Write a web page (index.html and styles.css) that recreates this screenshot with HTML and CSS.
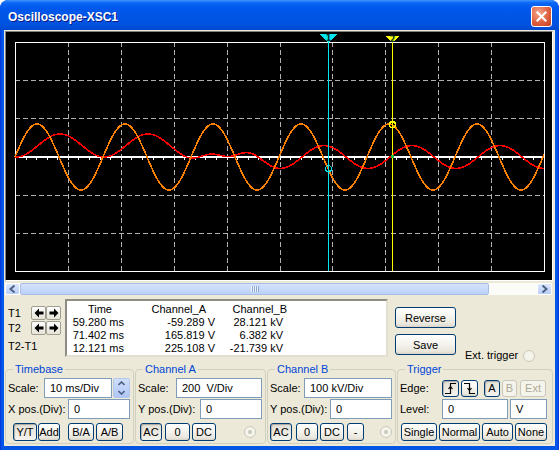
FILE: index.html
```html
<!DOCTYPE html>
<html lang="en">
<head>
  <meta charset="UTF-8">
  <title>Oscilloscope-XSC1</title>
  <link rel="stylesheet" href="styles.css">
</head>
<body>
<div class="window">
  <div class="titlebar">
    <span class="title">Oscilloscope-XSC1</span>
    <button class="close">
      <svg width="13" height="13" viewBox="0 0 13 13"><path d="M2.5 2.5 L10.5 10.5 M10.5 2.5 L2.5 10.5" stroke="#fff" stroke-width="2.2" stroke-linecap="square"/></svg>
    </button>
  </div>

  <div class="client">
    <!-- scope screen, drawn in page coordinates via the viewBox -->
    <div class="screen">
      <svg id="scope" width="546" height="248" viewBox="6 32 546 248" shape-rendering="crispEdges">
        <g id="grid"></g>
        <g id="traces"></g>
        <g id="cursors"></g>
      </svg>
    </div>

    <div class="hscroll">
      <div class="sb-btn"><svg width="7" height="8" viewBox="0 0 7 8"><path d="M5.5 0.5 L1.5 4 L5.5 7.5" fill="none" stroke="#4D6185" stroke-width="2"/></svg></div>
      <div class="sb-thumb"><span class="grip"></span></div>
      <div class="sb-track"></div>
      <div class="sb-btn"><svg width="7" height="8" viewBox="0 0 7 8"><path d="M1.5 0.5 L5.5 4 L1.5 7.5" fill="none" stroke="#4D6185" stroke-width="2"/></svg></div>
    </div>

    <div class="readout">
      <div class="cursors">
        <div class="crow">
          <span class="clabel">T1</span>
          <button class="arr"><svg width="10" height="10" viewBox="0 0 10 10"><path d="M0.5 5 L5 0.5 V3.5 H9.5 V6.5 H5 V9.5 Z"/></svg></button>
          <button class="arr"><svg width="10" height="10" viewBox="0 0 10 10"><path d="M9.5 5 L5 0.5 V3.5 H0.5 V6.5 H5 V9.5 Z"/></svg></button>
        </div>
        <div class="crow">
          <span class="clabel">T2</span>
          <button class="arr"><svg width="10" height="10" viewBox="0 0 10 10"><path d="M0.5 5 L5 0.5 V3.5 H9.5 V6.5 H5 V9.5 Z"/></svg></button>
          <button class="arr"><svg width="10" height="10" viewBox="0 0 10 10"><path d="M9.5 5 L5 0.5 V3.5 H0.5 V6.5 H5 V9.5 Z"/></svg></button>
        </div>
        <div class="cdiff">T2-T1</div>
      </div>

      <div class="readings">
        <span class="h h-time">Time</span><span class="h h-a">Channel_A</span><span class="h h-b">Channel_B</span>
        <span>59.280 ms</span><span>-59.289 V</span><span>28.121 kV</span>
        <span>71.402 ms</span><span>165.819 V</span><span>6.382 kV</span>
        <span>12.121 ms</span><span>225.108 V</span><span>-21.739 kV</span>
      </div>

      <div class="side">
        <button class="btn big">Reverse</button>
        <button class="btn big">Save</button>
      </div>

      <div class="ext">Ext. trigger <span class="radio"></span></div>
    </div>

    <div class="controls">
      <fieldset class="group tb">
        <legend>Timebase</legend>
        <div class="row">
          <span class="lbl w36">Scale:</span>
          <div class="field w68">10 ms/Div</div>
          <div class="spin">
            <svg width="7" height="5" viewBox="0 0 7 5"><path d="M0.5 4 L3.5 1 L6.5 4" fill="none" stroke="#4D6185" stroke-width="1.6"/></svg>
            <svg width="7" height="5" viewBox="0 0 7 5"><path d="M0.5 1 L3.5 4 L6.5 1" fill="none" stroke="#4D6185" stroke-width="1.6"/></svg>
          </div>
        </div>
        <div class="row">
          <span class="lbl w60">X pos.(Div):</span>
          <div class="field w62">0</div>
        </div>
        <div class="row btns">
          <button class="btn on" style="margin-left:5px;width:24px">Y/T</button>
          <button class="btn" style="margin-left:1px;width:22px">Add</button>
          <button class="btn" style="margin-left:8px;width:26px">B/A</button>
          <button class="btn" style="margin-left:2px;width:27px">A/B</button>
        </div>
      </fieldset>

      <fieldset class="group ca">
        <legend>Channel A</legend>
        <div class="row">
          <span class="lbl w38">Scale:</span>
          <div class="field w86">200&nbsp; V/Div</div>
        </div>
        <div class="row">
          <span class="lbl w62">Y pos.(Div):</span>
          <div class="field w62">0</div>
        </div>
        <div class="row btns">
          <button class="btn on" style="margin-left:2px;width:22px">AC</button>
          <button class="btn" style="margin-left:3px;width:25px">0</button>
          <button class="btn" style="margin-left:2px;width:24px">DC</button>
          <span class="radio dot" style="margin-left:28px"></span>
        </div>
      </fieldset>

      <fieldset class="group cb">
        <legend>Channel B</legend>
        <div class="row">
          <span class="lbl w34">Scale:</span>
          <div class="field w88">100 kV/Div</div>
        </div>
        <div class="row">
          <span class="lbl w60">Y pos.(Div):</span>
          <div class="field w62">0</div>
        </div>
        <div class="row btns">
          <button class="btn on" style="width:22px">AC</button>
          <button class="btn" style="margin-left:4px;width:22px">0</button>
          <button class="btn" style="margin-left:2px;width:24px">DC</button>
          <button class="btn" style="margin-left:3px;width:17px">-</button>
          <span class="radio dot" style="margin-left:16px"></span>
        </div>
      </fieldset>

      <fieldset class="group tr">
        <legend>Trigger</legend>
        <div class="row">
          <span class="lbl w42">Edge:</span>
          <button class="btn edge on"><svg width="13" height="13" viewBox="0 0 13 13"><path d="M1 11.5 H6.5 V1.5 H12 M4.5 7 L6.5 4.5 L8.5 7" fill="none" stroke="#000" stroke-width="1.2"/></svg></button>
          <button class="btn edge" style="margin-left:2px"><svg width="13" height="13" viewBox="0 0 13 13"><path d="M1 1.5 H6.5 V11.5 H12 M4.5 6 L6.5 8.5 L8.5 6" fill="none" stroke="#000" stroke-width="1.2"/></svg></button>
          <button class="btn on small" style="margin-left:6px;width:16px">A</button>
          <button class="btn off small" style="margin-left:2px;width:15px">B</button>
          <button class="btn off small" style="margin-left:3px;width:26px">Ext</button>
        </div>
        <div class="row">
          <span class="lbl w42">Level:</span>
          <div class="field w66">0</div>
          <div class="field w37" style="margin-left:2px">V</div>
        </div>
        <div class="row btns">
          <button class="btn" style="margin-left:1px;width:36px">Single</button>
          <button class="btn" style="margin-left:2px;width:41px">Normal</button>
          <button class="btn" style="margin-left:2px;width:31px">Auto</button>
          <button class="btn" style="margin-left:2px;width:32px">None</button>
        </div>
      </fieldset>
    </div>
  </div>
</div>

<script>
  const NS = 'http://www.w3.org/2000/svg';

  function el(parent, tag, attrs) {
    const node = document.createElementNS(NS, tag);
    for (const k in attrs) node.setAttribute(k, attrs[k]);
    parent.appendChild(node);
    return node;
  }

  // graticule: 10 x 6 divisions
  const L = 15, R = 544, T = 42, B = 271;
  const dx = (R - L) / 10, dy = (B - T) / 6;
  const grid = document.getElementById('grid');

  for (let i = 1; i < 10; i++) {
    const x = Math.round(L + i * dx) + 0.5;
    el(grid, 'line', { x1: x, y1: T, x2: x, y2: B, class: 'dash' });
  }
  for (let j = 1; j < 6; j++) {
    if (j === 3) continue;
    const y = Math.round(T + j * dy) + 0.5;
    el(grid, 'line', { x1: L, y1: y, x2: R, y2: y, class: 'dash' });
  }
  el(grid, 'rect', { x: L + 0.5, y: T + 0.5, width: R - L, height: B - T, class: 'frame' });

  const mid = 157;
  el(grid, 'line', { x1: L, y1: mid, x2: R, y2: mid, class: 'axis' });
  for (let k = 0; k <= 50; k++) {
    const x = Math.round(L + k * dx / 5) + 0.5;
    el(grid, 'line', { x1: x, y1: mid + 1, x2: x, y2: mid + 3, class: 'tick' });
  }

  // traces
  const period = 88;
  const smooth = t => { t = Math.min(1, Math.max(0, t)); return t * t * (3 - 2 * t); };

  function chanA(x) {
    return mid - 33 * Math.cos(2 * Math.PI * (x - 37) / period);
  }
  function chanB(x) {
    const off = 11.5 * (1 - smooth((x - 170) / 65));
    const dip = Math.exp(-Math.pow((x - 225) / 25, 2));
    const amp = 11.5 * (1 - dip);
    return mid - off - amp * Math.cos(2 * Math.PI * (x - 60) / period);
  }

  const traces = document.getElementById('traces');
  function plot(fn, cls) {
    const pts = [];
    for (let x = L; x <= R; x++) pts.push(x + ',' + fn(x).toFixed(1));
    el(traces, 'polyline', { points: pts.join(' '), class: cls });
  }
  plot(chanB, 'trace-b');
  plot(chanA, 'trace-a');

  // cursors
  const cur = document.getElementById('cursors');
  el(cur, 'line', { x1: 328.5, y1: 34, x2: 328.5, y2: B, class: 'cur1' });
  el(cur, 'line', { x1: 392.5, y1: 36, x2: 392.5, y2: B, class: 'cur2' });
  el(cur, 'polygon', { points: '320,34 337,34 328.5,43', fill: '#00E5EE' });
  el(cur, 'polygon', { points: '385,36 400,36 392.5,43', fill: '#FFFF00' });
  el(cur, 'text', { x: 328.5, y: 41, class: 'cnum' }).textContent = '1';
  el(cur, 'text', { x: 392.5, y: 41.5, class: 'cnum' }).textContent = '2';
  el(cur, 'circle', { cx: 328.5, cy: chanA(328).toFixed(1), r: 3, class: 'mark1' });
  el(cur, 'circle', { cx: 392.5, cy: chanA(392).toFixed(1), r: 3, class: 'mark2' });
  el(cur, 'rect', { x: 391, y: 155, width: 3, height: 3, fill: '#20C040' });
</script>
</body>
</html>
```

FILE: styles.css
```css
* {
  box-sizing: border-box;
}
body {
  margin: 0;
  font-family: "Liberation Sans", Arial, sans-serif;
  font-size: 11px;
  color: #000;
  background: #fff;
}
button {
  font: inherit;
  color: #000;
  cursor: pointer;
}

/* window frame */
.window {
  width: 559px;
  height: 450px;
  display: flex;
  flex-direction: column;
  padding: 0 4px 4px;
  background: linear-gradient(90deg, #0831D9, #0058EE 2px, #0055E5 4px, #0055E5 555px, #0058EE 557px, #0831D9);
  border-radius: 8px 8px 0 0;
  overflow: hidden;
}
.titlebar {
  height: 30px;
  margin: 0 -4px;
  padding: 6px 7px 0 8px;
  display: flex;
  justify-content: space-between;
  align-items: flex-start;
  background: linear-gradient(#3D95FF 0, #0A66F5 3px, #0058EE 8px, #0055E5 16px, #0053E0 24px, #0049D0 30px);
  border-radius: 8px 8px 0 0;
}
.title {
  margin-top: 4px;
  color: #fff;
  font-weight: bold;
  font-size: 12px;
  text-shadow: 1px 1px 0 #0A1883;
}
.close {
  width: 21px;
  height: 21px;
  padding: 0;
  display: flex;
  align-items: center;
  justify-content: center;
  border: 1px solid #fff;
  border-radius: 3px;
  background: radial-gradient(circle at 35% 30%, #F3A58A, #E06040 55%, #C4401D);
}

.client {
  flex: 1;
  display: flex;
  flex-direction: column;
  background: #ECE9D8;
}

/* scope screen */
.screen {
  margin: 1px 2px 0 1px;
  height: 250px;
  background: #000;
  border: 1px solid;
  border-color: #808080 #fff #fff #808080;
}
.screen svg {
  display: block;
}
.dash {
  stroke: #B0B0B0;
  stroke-width: 1;
  stroke-dasharray: 5 3;
}
.frame {
  fill: none;
  stroke: #fff;
}
.axis {
  stroke: #fff;
  stroke-width: 2;
}
.tick {
  stroke: #fff;
}
.trace-a {
  fill: none;
  stroke: #FF8000;
  stroke-width: 1.6;
}
.trace-b {
  fill: none;
  stroke: #FF0000;
  stroke-width: 1.6;
}
.cur1 {
  stroke: #00E5EE;
}
.cur2 {
  stroke: #FFFF00;
}
.cnum {
  font-family: "DejaVu Sans", sans-serif;
  font-size: 8px;
  font-weight: bold;
  text-anchor: middle;
  fill: #003030;
}
.mark1 {
  fill: none;
  stroke: #00E5EE;
}
.mark2 {
  fill: none;
  stroke: #FFFF00;
  stroke-width: 1.5;
}

/* horizontal scroll bar */
.hscroll {
  margin: 2px 3px 0 1px;
  height: 12px;
  display: flex;
  background: #FBFBF8;
}
.sb-btn {
  width: 15px;
  display: flex;
  align-items: center;
  justify-content: center;
  background: linear-gradient(#DCE8FD, #B9CFF7);
  border: 1px solid #fff;
  border-radius: 2px;
}
.sb-thumb {
  width: 469px;
  display: flex;
  align-items: center;
  justify-content: center;
  background: linear-gradient(#D4E2FC, #BCD1F8);
  border: 1px solid #A8BEE8;
  border-radius: 2px;
}
.grip {
  width: 8px;
  height: 6px;
  background: repeating-linear-gradient(90deg, #EEF4FE 0 1px, #8CA6D8 1px 2px);
}
.sb-track {
  flex: 1;
}

/* cursor readout */
.readout {
  height: 66px;
  margin-top: 2px;
  display: flex;
}
.cursors {
  width: 61px;
  padding: 9px 0 0 4px;
}
.crow {
  height: 14px;
  margin-bottom: 1px;
  display: flex;
  align-items: center;
}
.clabel {
  width: 23px;
}
.arr {
  width: 15px;
  height: 14px;
  padding: 0;
  display: flex;
  align-items: center;
  justify-content: center;
  border: 1px solid #A09E90;
  border-radius: 2px;
  background: linear-gradient(#FFFFFF, #E6E3D6);
}
.arr svg {
  fill: #000;
}
.cdiff {
  margin-top: 5px;
  line-height: 13px;
}
.readings {
  width: 323px;
  height: 58px;
  margin-top: 2px;
  padding-top: 2px;
  display: grid;
  grid-template-columns: 57px 91px 68px;
  grid-auto-rows: 13px;
  line-height: 13px;
  background: #fff;
  border: 2px solid #ACA899;
  border-top-color: #8E8D84;
  border-left-color: #8E8D84;
  border-right-color: #E2DFD0;
  border-bottom-color: #E2DFD0;
}
.readings span {
  text-align: right;
  white-space: nowrap;
}
.readings .h-time {
  padding-right: 12px;
}
.readings .h-a {
  padding-right: 9px;
}
.readings .h-b {
  margin-right: -4px;
}
.side {
  margin-left: 7px;
  padding-top: 10px;
  display: flex;
  flex-direction: column;
  gap: 6px;
}
.ext {
  margin: 0 0 1px 9px;
  align-self: flex-end;
  display: flex;
  align-items: center;
  gap: 5px;
  line-height: 13px;
}

/* buttons */
.btn {
  height: 18px;
  padding: 0;
  border: 1px solid #003C74;
  border-radius: 3px;
  background: linear-gradient(#FFFFFF, #F6F5F0 40%, #E9E7DD 85%, #D8D3C5);
  white-space: nowrap;
}
.btn.big {
  width: 61px;
  height: 21px;
}
.btn.on {
  background: linear-gradient(#E2E0D6, #EDEBE3 60%, #F4F3EE);
  box-shadow: inset 1px 1px 1px rgba(0, 0, 0, 0.25);
}
.btn.off {
  color: #ACA899;
  border-color: #C9C7BA;
  background: #F5F4EA;
}
.btn.small {
  height: 17px;
}
.btn.edge {
  width: 17px;
  height: 17px;
  display: flex;
  align-items: center;
  justify-content: center;
}

.radio {
  width: 12px;
  height: 12px;
  display: inline-flex;
  align-items: center;
  justify-content: center;
  border: 1px solid #CAC8BB;
  border-radius: 50%;
  background: #F5F4EA;
}
.radio.dot::after {
  content: "";
  width: 4px;
  height: 4px;
  border-radius: 50%;
  background: #CAC8BB;
}

/* control groups */
.controls {
  display: flex;
  gap: 1px;
  margin: 0 2px 0 1px;
}
.group {
  margin: 0;
  padding: 2px 2px 0;
  height: 81px;
  min-width: 0;
  border: 1px solid #D0D0BF;
  border-radius: 4px;
}
.group legend {
  margin-left: 5px;
  padding: 0 2px;
  line-height: 13px;
  color: #0046D5;
}
.tb {
  width: 129px;
}
.ca {
  width: 131px;
}
.cb {
  width: 129px;
}
.tr {
  width: 156px;
}
.row {
  height: 20px;
  display: flex;
  align-items: center;
}
.row + .row {
  margin-top: 1px;
}
.row.btns {
  height: 18px;
  margin-top: 4px;
}
.lbl {
  flex: none;
  white-space: nowrap;
}
.field {
  height: 20px;
  padding: 0 5px;
  line-height: 18px;
  background: #fff;
  border: 1px solid #7F9DB9;
  white-space: nowrap;
}
.spin {
  width: 17px;
  height: 20px;
  margin-left: 1px;
  display: flex;
  flex-direction: column;
  align-items: center;
  justify-content: space-around;
  background: linear-gradient(#D0DEFB, #AFC6F4);
  border: 1px solid #B4C8EE;
  border-radius: 2px;
}
.w34 { width: 34px; }
.w36 { width: 36px; }
.w37 { width: 37px; }
.w38 { width: 38px; }
.w42 { width: 42px; }
.w60 { width: 60px; }
.w62 { width: 62px; }
.w66 { width: 66px; }
.w68 { width: 68px; }
.w86 { width: 86px; }
.w88 { width: 88px; }
```
